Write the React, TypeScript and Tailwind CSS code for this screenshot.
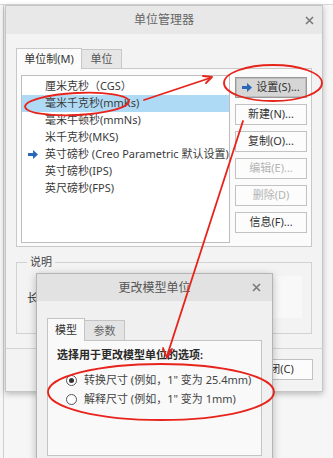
import { useState } from "react";

const units = [
  { label: "厘米克秒（CGS）" },
  { label: "毫米千克秒(mmKs)", selected: true },
  { label: "毫米牛顿秒(mmNs)" },
  { label: "米千克秒(MKS)" },
  { label: "英寸磅秒 (Creo Parametric 默认设置)", current: true },
  { label: "英寸磅秒(IPS)" },
  { label: "英尺磅秒(FPS)" },
];

const actions = [
  { label: "设置(S)...", pressed: true },
  { label: "新建(N)..." },
  { label: "复制(O)..." },
  { label: "编辑(E)...", disabled: true },
  { label: "删除(D)", disabled: true },
  { label: "信息(F)..." },
];

function BlueArrow() {
  return (
    <svg width="10" height="9" viewBox="0 0 10 9" className="shrink-0">
      <path d="M0 3h5V0l5 4.5L5 9V6H0z" fill="#2a68b8" />
    </svg>
  );
}

function CloseX() {
  return (
    <svg width="9" height="9" viewBox="0 0 9 9">
      <path d="M1 1l7 7M8 1L1 8" stroke="#7a7a7a" strokeWidth="1.6" />
    </svg>
  );
}

function Radio({ checked }: { checked?: boolean }) {
  return (
    <span className="flex h-[11px] w-[11px] items-center justify-center rounded-full border border-[#555] bg-white">
      {checked && <span className="h-[5px] w-[5px] rounded-full bg-[#333]" />}
    </span>
  );
}

export default function App() {
  const [mode, setMode] = useState(0);

  return (
    <div
      className="relative h-[458px] w-[333px] overflow-hidden bg-[#f6f6f6] text-[11px] text-[#333]"
      style={{ fontFamily: '"Noto Sans", "Noto Sans CJK SC", sans-serif' }}
    >
      {/* app behind */}
      <div className="absolute left-0 top-0 h-[5px] w-full border-b border-[#d8d8d8] bg-white" />
      <div className="absolute left-[3px] top-[5px] h-[453px] w-px bg-[#cfcfcf]" />

      {/* 单位管理器 */}
      <div className="absolute left-[5px] top-[5px] flex h-[387px] w-[318px] flex-col border border-[#c6c6c6] bg-[#f3f3f3] shadow-[0_2px_6px_rgba(0,0,0,0.25)]">
        <div className="relative flex h-[28px] shrink-0 items-center justify-center bg-[#e8e8e8] text-[12px] text-[#666]">
          单位管理器
          <span className="absolute right-[8px] top-[10px]">
            <CloseX />
          </span>
        </div>

        <div className="flex flex-col px-[10px] pt-[15px]">
          <div className="flex h-[20px] items-end">
            <div className="relative z-10 flex h-[21px] w-[66px] items-center justify-center border border-b-0 border-[#c8c8c8] bg-[#fbfbfb]">
              单位制(M)
            </div>
            <div className="flex h-[20px] w-[40px] items-center justify-center border border-l-0 border-b-0 border-[#c8c8c8] bg-[#e6e6e6] text-[#555]">
              单位
            </div>
          </div>
          <div className="-mt-px flex h-[179px] gap-[5px] border border-[#c8c8c8] bg-[#fbfbfb] pl-[4px] pt-[6px]">
            <div className="h-[168px] w-[209px] border border-[#bdbdbd] bg-white pt-[2px]">
              {units.map((u) => (
                <div
                  key={u.label}
                  className={`flex h-[17px] items-center gap-[7px] pl-[6px] ${u.selected ? "bg-[#aedaf6]" : ""}`}
                >
                  <span className="flex w-[10px] justify-center">{u.current && <BlueArrow />}</span>
                  <span className="whitespace-nowrap text-[#3a3a3a]">{u.label}</span>
                </div>
              ))}
            </div>
            <div className="flex w-[72px] flex-col gap-[6px] pt-[2px]">
              {actions.map((a) => (
                <div
                  key={a.label}
                  className={`flex h-[21px] items-center justify-center gap-[4px] border ${
                    a.pressed
                      ? "border-[#9a9a9a] bg-[#d6d6d6] shadow-[inset_0_0_0_1px_#bdbdbd]"
                      : "border-[#c2c2c2] bg-[#fcfcfc]"
                  } ${a.disabled ? "text-[#b4b4b4]" : "text-[#333]"}`}
                >
                  {a.pressed && <BlueArrow />}
                  {a.label}
                </div>
              ))}
            </div>
          </div>

          <div className="relative mt-[15px] h-[72px] border border-[#d2d2d2]">
            <span className="absolute left-[10px] top-[-9px] bg-[#f3f3f3] px-[3px] text-[#444]">说明</span>
            <div className="ml-[10px] mt-[27px]">长度 毫米</div>
            <div className="absolute right-[9px] top-[13px] h-[42px] w-[36px] bg-[#f8f8f8]" />
          </div>
        </div>

        <div className="mt-[14px] border-t border-[#d4d4d4] px-[9px] pt-[10px]">
          <div className="ml-auto flex h-[21px] w-[74px] items-center justify-center border border-[#c2c2c2] bg-[#fcfcfc]">
            关闭(C)
          </div>
        </div>
      </div>

      {/* 更改模型单位 */}
      <div className="absolute left-[36px] top-[273px] flex h-[190px] w-[237px] flex-col border border-[#b4b4b4] bg-[#f0f0f0] shadow-[0_2px_8px_rgba(0,0,0,0.25)]">
        <div className="relative flex h-[27px] shrink-0 items-center justify-center bg-[#e2e2e2] text-[12px] text-[#555]">
          更改模型单位
          <span className="absolute right-[11px] top-[9px]">
            <CloseX />
          </span>
        </div>
        <div className="flex flex-col px-[10px] pt-[18px]">
          <div className="flex h-[22px] items-end">
            <div className="relative z-10 flex h-[23px] w-[38px] items-center justify-center border border-b-0 border-[#c4c4c4] bg-[#f9f9f9]">
              模型
            </div>
            <div className="flex h-[21px] w-[40px] items-center justify-center border border-l-0 border-b-0 border-[#c4c4c4] bg-[#e4e4e4] text-[#666]">
              参数
            </div>
          </div>
          <div className="-mt-px h-[116px] border border-[#c4c4c4] bg-[#f9f9f9] px-[9px] pt-[6px]">
            <div className="font-semibold text-[#2a2a2a]">选择用于更改模型单位的选项:</div>
            <div className="mt-[9px] flex flex-col gap-[4px] pl-[9px]">
              {["转换尺寸 (例如，1\" 变为 25.4mm)", "解释尺寸 (例如，1\" 变为 1mm)"].map((t, i) => (
                <div key={t} className="flex h-[15px] items-center gap-[7px] text-[#444]" onClick={() => setMode(i)}>
                  <Radio checked={mode === i} />
                  <span className="whitespace-nowrap">{t}</span>
                </div>
              ))}
            </div>
          </div>
        </div>
      </div>

      {/* red annotations */}
      <svg className="pointer-events-none absolute left-0 top-0" width="333" height="458" viewBox="0 0 333 458" fill="none">
        <g stroke="#e8231b" strokeWidth="1.8" strokeLinecap="round">
          <ellipse cx="77" cy="104" rx="52" ry="11" transform="rotate(-3 77 104)" />
          <path d="M144 100L210 78" />
          <path d="M212 77l-9-1M212 77l-6 6" />
          <ellipse cx="273" cy="83" rx="49" ry="18" />
          <path d="M243 121L167 356" />
          <path d="M167 358l-4-10M167 358l5-9" />
          <ellipse cx="161" cy="392" rx="113" ry="28" />
        </g>
      </svg>
    </div>
  );
}
